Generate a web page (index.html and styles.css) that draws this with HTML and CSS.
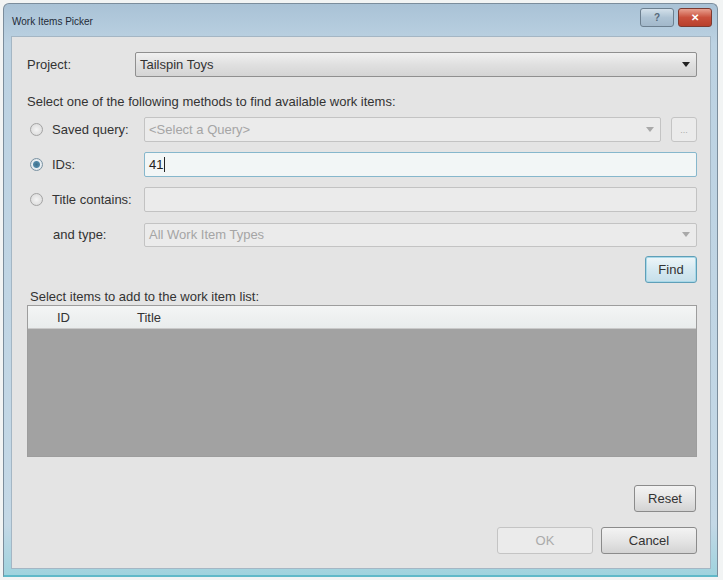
FILE: index.html
```html
<!DOCTYPE html>
<html lang="en">
<head>
    <meta charset="UTF-8" />
    <meta name="viewport" content="width=device-width, initial-scale=1.0" />
    <title>Work Items Picker</title>
    <link rel="stylesheet" href="styles.css">
</head>
<body>

<div class="window">
    <div class="titlebar">
        <span class="title">Work Items Picker</span>
        <div class="caption-btns">
            <button class="cap-btn help">?</button>
            <button class="cap-btn close">&#x2715;</button>
        </div>
    </div>

    <div class="client">
        <div class="row">
            <label class="lbl">Project:</label>
            <div class="combo">
                <span>Tailspin Toys</span>
                <span class="arrow"></span>
            </div>
        </div>

        <p class="hint">Select one of the following methods to find available work items:</p>

        <div class="row opt">
            <label class="lbl radio-lbl"><span class="radio"></span>Saved query:</label>
            <div class="combo disabled">
                <span>&lt;Select a Query&gt;</span>
                <span class="arrow"></span>
            </div>
            <button class="btn small disabled">...</button>
        </div>

        <div class="row opt">
            <label class="lbl radio-lbl"><span class="radio checked"></span>IDs:</label>
            <div class="field focus">41<span class="caret"></span></div>
        </div>

        <div class="row opt">
            <label class="lbl radio-lbl"><span class="radio"></span>Title contains:</label>
            <div class="field"></div>
        </div>

        <div class="row opt type-row">
            <label class="lbl sub-lbl">and type:</label>
            <div class="combo disabled">
                <span>All Work Item Types</span>
                <span class="arrow"></span>
            </div>
        </div>

        <div class="btn-row">
            <button class="btn find">Find</button>
        </div>

        <p class="list-lbl">Select items to add to the work item list:</p>
        <div class="list">
            <div class="list-head">
                <span class="col-id">ID</span>
                <span class="col-title">Title</span>
            </div>
            <div class="list-body"></div>
        </div>

        <div class="btn-row reset-row">
            <button class="btn">Reset</button>
        </div>
        <div class="btn-row footer">
            <button class="btn wide disabled">OK</button>
            <button class="btn wide">Cancel</button>
        </div>
    </div>
</div>

</body>
</html>
```
FILE: styles.css
```css
* {
    margin: 0;
    padding: 0;
    box-sizing: border-box;
}
body {
    background-color: #f2f4f4;
    font-family: "Liberation Sans", Arial, sans-serif;
    font-size: 13px;
    color: #2a2a2a;
}
.window {
    margin: 3px 0 0 3px;
    width: 715px;
    height: 574px;
    border: 1px solid #7b8d9c;
    border-radius: 6px 6px 0 0;
    background: linear-gradient(#a9c2d6, #bcd2e2 40px, #c4d8e6 520px, #9fd3de);
    display: flex;
    flex-direction: column;
    padding: 0 6px 6px 7px;
    border-bottom: 2px solid #5fb9c9;
}
.titlebar {
    height: 32px;
    display: flex;
    align-items: center;
    justify-content: space-between;
    flex-shrink: 0;
}
.title {
    font-size: 10px;
    color: #1f2b38;
    padding-left: 1px;
    padding-top: 3px;
}
.caption-btns {
    display: flex;
    gap: 4px;
    margin-top: -5px;
    margin-right: -1px;
}
.cap-btn {
    width: 34px;
    height: 19px;
    border: 1px solid #6c7f8f;
    border-radius: 3px;
    font-size: 10px;
    font-weight: bold;
    cursor: pointer;
}
.cap-btn.help {
    background: linear-gradient(#d3e0ea, #aec3d4 50%, #a2b8ca);
    color: #56697a;
}
.cap-btn.close {
    background: linear-gradient(#e8a08f, #c9503c 50%, #b8402c);
    color: #fff;
    border-color: #7c3a30;
}
.client {
    flex: 1;
    background-color: #e4e4e4;
    border: 1px solid #a4b6c4;
    padding: 15px 13px 0 15px;
    display: flex;
    flex-direction: column;
}
.row {
    display: flex;
    align-items: center;
    height: 25px;
}
.opt {
    margin-top: 10px;
}
.lbl {
    width: 108px;
    flex-shrink: 0;
    color: #333;
}
.radio-lbl, .sub-lbl {
    width: 117px;
    display: flex;
    align-items: center;
}
.radio-lbl {
    padding-left: 3px;
}
.sub-lbl {
    padding-left: 26px;
}
.radio {
    width: 13px;
    height: 13px;
    border-radius: 50%;
    border: 1px solid #a3a3a3;
    background: radial-gradient(#f4f4f4, #d6d6d6);
    margin-right: 9px;
    flex-shrink: 0;
}
.radio.checked {
    background: radial-gradient(#3f6f8a 0, #4f88a8 3px, #e8eef2 4px, #d2dbe0);
    border-color: #7b93a3;
}
.combo {
    flex: 1;
    height: 25px;
    border: 1px solid #8f8f8f;
    border-radius: 2px;
    background: linear-gradient(#f1f1f1, #e0e0e0 50%, #d4d4d4);
    display: flex;
    align-items: center;
    justify-content: space-between;
    padding: 0 6px 0 4px;
    color: #333;
}
.combo.disabled {
    background: #ebebeb;
    border-color: #c3c3c3;
    color: #a5a5a5;
}
.arrow {
    width: 0;
    height: 0;
    border-left: 4px solid transparent;
    border-right: 4px solid transparent;
    border-top: 5px solid #222;
}
.combo.disabled .arrow {
    border-top-color: #a9a9a9;
}
.hint {
    margin-top: 17px;
    height: 15px;
    color: #333;
}
.hint + .opt {
    margin-top: 8px;
}
.field {
    flex: 1;
    height: 25px;
    border: 1px solid #c2c2c2;
    border-radius: 2px;
    background: #ebebeb;
    display: flex;
    align-items: center;
    padding-left: 4px;
}
.field.focus {
    border-color: #86b7cc;
    background: #f2f6f6;
    color: #222;
}
.caret {
    width: 1px;
    height: 15px;
    background: #222;
    margin-left: 1px;
}
.type-row .combo {
    height: 24px;
}
.btn {
    height: 27px;
    width: 62px;
    border: 1px solid #8b8b8b;
    border-radius: 3px;
    background: linear-gradient(#f3f3f3, #e5e5e5 50%, #d3d3d3);
    font-family: "Liberation Sans", Arial, sans-serif;
    font-size: 13px;
    color: #333;
    cursor: pointer;
}
.btn.disabled {
    background: #ebebeb;
    border-color: #c4c4c4;
    color: #aaa;
}
.btn.small {
    width: 26px;
    height: 25px;
    margin-left: 10px;
    font-size: 9px;
}
.btn-row {
    display: flex;
    justify-content: flex-end;
    gap: 8px;
}
.btn.find {
    width: 52px;
    margin-top: 9px;
    border-color: #5f9fb8;
    background: linear-gradient(#eef6f9, #d6e9f1 50%, #c6dfea);
    box-shadow: 0 0 0 1px #a8d8e8 inset;
}
.list-lbl {
    margin-top: 6px;
    padding-left: 3px;
    height: 16px;
    color: #333;
}
.list {
    height: 152px;
    border: 1px solid #9d9d9d;
    display: flex;
    flex-direction: column;
}
.list-head {
    height: 23px;
    background: linear-gradient(#f4f5f5, #e9ecec);
    border-bottom: 1px solid #c9c9c9;
    display: flex;
    align-items: center;
    color: #333;
}
.col-id {
    width: 80px;
    padding-left: 29px;
}
.col-title {
    padding-left: 29px;
}
.list-body {
    flex: 1;
    background-color: #a2a2a2;
}
.reset-row {
    margin-top: 28px;
    padding-right: 1px;
}
.footer {
    margin-top: 15px;
}
.btn.wide {
    width: 96px;
}
```
